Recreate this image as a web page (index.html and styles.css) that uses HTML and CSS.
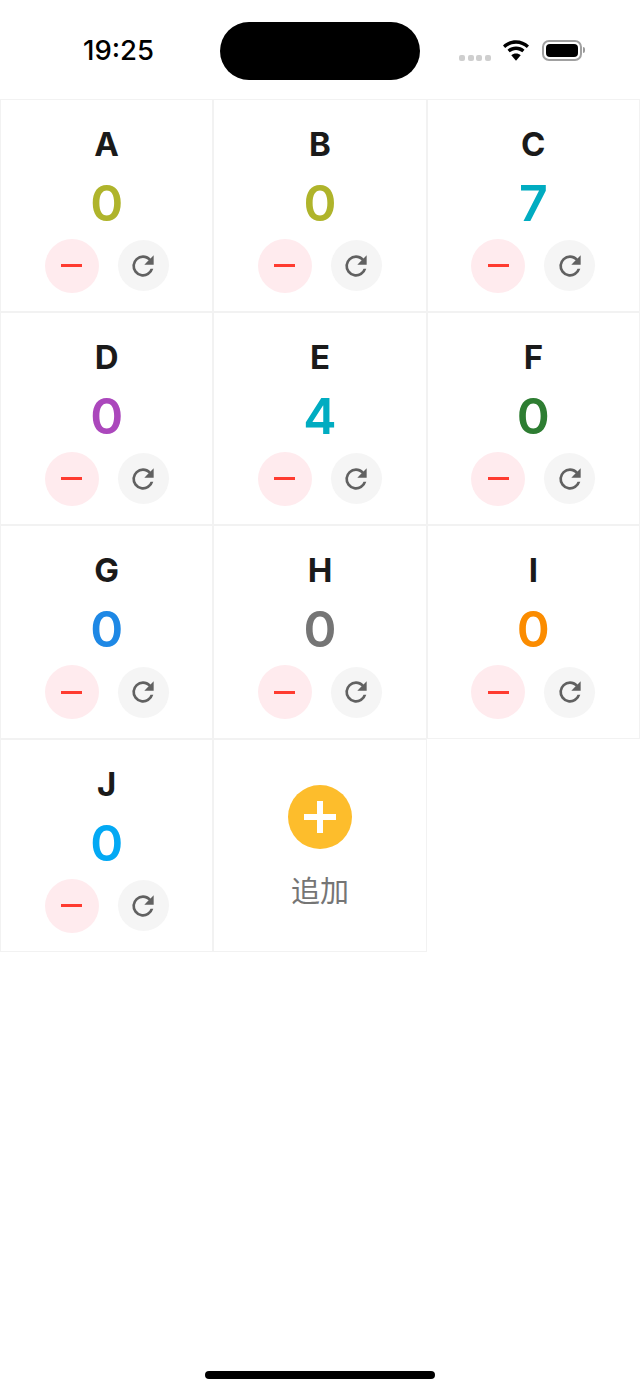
FILE: index.html
```html
<!DOCTYPE html>
<html lang="zh">
<head>
    <meta charset="UTF-8">
    <meta name="viewport" content="width=device-width, initial-scale=1.0">
    <title>计数器</title>
    <link rel="stylesheet" href="styles.css">
</head>
<body>
    <div class="status-bar">
        <div class="time">19:25</div>
        <div class="island"></div>
        <div class="signal"><i></i><i></i><i></i><i></i></div>
        <svg class="wifi" viewBox="1.7 1.2 22.6 17.8">
            <path d="M13 4.200c3.600 0 6.900 1.400 9.400 3.700l1.900-2.200C21.300 2.900 17.300 1.200 13 1.200S4.700 2.900 1.700 5.700l1.900 2.200C6.100 5.600 9.400 4.200 13 4.200z"/>
            <path d="M13 9.600c2.100 0 4 .8 5.500 2.100l1.900-2.200c-2-1.800-4.600-2.800-7.400-2.800s-5.400 1-7.400 2.800l1.900 2.200c1.500-1.300 3.400-2.100 5.500-2.100z"/>
            <path d="M13 19l4.100-4.700c-1.100-.9-2.500-1.500-4.100-1.500s-3 .6-4.100 1.500z"/>
        </svg>
        <div class="battery"><div class="battery-fill"></div></div>
        <div class="battery-cap"></div>
    </div>

    <div class="grid">
        <div class="cell">
            <div class="name">A</div>
            <div class="count olive">0</div>
            <div class="actions">
                <button class="minus"><span></span></button>
                <button class="reset"><svg viewBox="0 0 24 24"><path d="M17.650 6.350A7.950 7.950 0 0 0 12 4a8 8 0 1 0 7.730 10h-2.080A6 6 0 1 1 12 6c1.660 0 3.140.69 4.220 1.780L13 11h7V4z"/></svg></button>
            </div>
        </div>
        <div class="cell">
            <div class="name">B</div>
            <div class="count olive">0</div>
            <div class="actions">
                <button class="minus"><span></span></button>
                <button class="reset"><svg viewBox="0 0 24 24"><path d="M17.650 6.350A7.950 7.950 0 0 0 12 4a8 8 0 1 0 7.730 10h-2.080A6 6 0 1 1 12 6c1.660 0 3.140.69 4.220 1.780L13 11h7V4z"/></svg></button>
            </div>
        </div>
        <div class="cell">
            <div class="name">C</div>
            <div class="count teal">7</div>
            <div class="actions">
                <button class="minus"><span></span></button>
                <button class="reset"><svg viewBox="0 0 24 24"><path d="M17.650 6.350A7.950 7.950 0 0 0 12 4a8 8 0 1 0 7.730 10h-2.080A6 6 0 1 1 12 6c1.660 0 3.140.69 4.220 1.780L13 11h7V4z"/></svg></button>
            </div>
        </div>
        <div class="cell">
            <div class="name">D</div>
            <div class="count purple">0</div>
            <div class="actions">
                <button class="minus"><span></span></button>
                <button class="reset"><svg viewBox="0 0 24 24"><path d="M17.650 6.350A7.950 7.950 0 0 0 12 4a8 8 0 1 0 7.730 10h-2.080A6 6 0 1 1 12 6c1.660 0 3.140.69 4.220 1.780L13 11h7V4z"/></svg></button>
            </div>
        </div>
        <div class="cell">
            <div class="name">E</div>
            <div class="count teal">4</div>
            <div class="actions">
                <button class="minus"><span></span></button>
                <button class="reset"><svg viewBox="0 0 24 24"><path d="M17.650 6.350A7.950 7.950 0 0 0 12 4a8 8 0 1 0 7.730 10h-2.080A6 6 0 1 1 12 6c1.660 0 3.140.69 4.220 1.780L13 11h7V4z"/></svg></button>
            </div>
        </div>
        <div class="cell">
            <div class="name">F</div>
            <div class="count green">0</div>
            <div class="actions">
                <button class="minus"><span></span></button>
                <button class="reset"><svg viewBox="0 0 24 24"><path d="M17.650 6.350A7.950 7.950 0 0 0 12 4a8 8 0 1 0 7.730 10h-2.080A6 6 0 1 1 12 6c1.660 0 3.140.69 4.220 1.780L13 11h7V4z"/></svg></button>
            </div>
        </div>
        <div class="cell">
            <div class="name">G</div>
            <div class="count blue">0</div>
            <div class="actions">
                <button class="minus"><span></span></button>
                <button class="reset"><svg viewBox="0 0 24 24"><path d="M17.650 6.350A7.950 7.950 0 0 0 12 4a8 8 0 1 0 7.730 10h-2.080A6 6 0 1 1 12 6c1.660 0 3.140.69 4.220 1.780L13 11h7V4z"/></svg></button>
            </div>
        </div>
        <div class="cell">
            <div class="name">H</div>
            <div class="count grey">0</div>
            <div class="actions">
                <button class="minus"><span></span></button>
                <button class="reset"><svg viewBox="0 0 24 24"><path d="M17.650 6.350A7.950 7.950 0 0 0 12 4a8 8 0 1 0 7.730 10h-2.080A6 6 0 1 1 12 6c1.660 0 3.140.69 4.220 1.780L13 11h7V4z"/></svg></button>
            </div>
        </div>
        <div class="cell">
            <div class="name">I</div>
            <div class="count orange">0</div>
            <div class="actions">
                <button class="minus"><span></span></button>
                <button class="reset"><svg viewBox="0 0 24 24"><path d="M17.650 6.350A7.950 7.950 0 0 0 12 4a8 8 0 1 0 7.730 10h-2.080A6 6 0 1 1 12 6c1.660 0 3.140.69 4.220 1.780L13 11h7V4z"/></svg></button>
            </div>
        </div>
        <div class="cell">
            <div class="name">J</div>
            <div class="count sky">0</div>
            <div class="actions">
                <button class="minus"><span></span></button>
                <button class="reset"><svg viewBox="0 0 24 24"><path d="M17.650 6.350A7.950 7.950 0 0 0 12 4a8 8 0 1 0 7.730 10h-2.080A6 6 0 1 1 12 6c1.660 0 3.140.69 4.220 1.780L13 11h7V4z"/></svg></button>
            </div>
        </div>
        <div class="cell add-cell">
            <div class="add-button"><span class="plus-h"></span><span class="plus-v"></span></div>
            <div class="add-label">追加</div>
        </div>
    </div>

    <div class="home-bar"></div>
</body>
</html>
```

FILE: styles.css
```css
* {
    margin: 0;
    padding: 0;
    box-sizing: border-box;
}
html, body {
    width: 100%;
    height: 100%;
    background: white;
    font-family: 'Inter', 'Noto Sans CJK SC', sans-serif;
    color: #1a1a1a;
}
body {
    display: flex;
    flex-direction: column;
}
.status-bar {
    height: 98.5px;
    flex-shrink: 0;
    display: flex;
    align-items: flex-start;
    padding-left: 83px;
    color: black;
}
.time {
    width: 137px;
    margin-top: 34px;
    font-size: 27.500px;
    line-height: 33px;
    font-weight: 500;
}
.island {
    width: 200px;
    height: 58px;
    margin-top: 22px;
    background: black;
    border-radius: 29px;
}
.signal {
    display: flex;
    gap: 2.5px;
    margin: 54.5px 0 0 39px;
}
.signal i {
    width: 6px;
    height: 6px;
    border-radius: 2px;
    background: #cfcfcf;
}
.wifi {
    width: 26px;
    height: 21px;
    margin: 40px 0 0 12.5px;
    display: block;
}
.battery {
    width: 40px;
    height: 21px;
    margin: 40px 0 0 12.5px;
    padding: 2px;
    border: 2px solid #a0a0a0;
    border-radius: 7px;
}
.battery-fill {
    width: 100%;
    height: 100%;
    background: black;
    border-radius: 4px;
}
.battery-cap {
    width: 2px;
    height: 6px;
    margin: 47px 0 0 1px;
    background: #9a9a9a;
    border-radius: 0 2px 2px 0;
}
.grid {
    display: grid;
    grid-template-columns: repeat(3, 1fr);
    grid-auto-rows: 213.4px;
}
.cell {
    border: 1px solid #f2f2f2;
    display: flex;
    flex-direction: column;
    align-items: center;
}
.name {
    margin-top: 23px;
    height: 42px;
    font-size: 33px;
    line-height: 42px;
    font-weight: 700;
}
.count {
    height: 60px;
    margin-top: 8px;
    font-size: 50px;
    line-height: 60px;
    font-weight: 600;
}
.olive { color: #afb42b; }
.teal { color: #00acc1; }
.purple { color: #ab47bc; }
.green { color: #2e7d32; }
.blue { color: #1e88e5; }
.grey { color: #757575; }
.orange { color: #fb8c00; }
.sky { color: #03a9f4; }
.actions {
    display: flex;
    align-items: center;
    gap: 19px;
    margin-top: 6px;
}
button {
    border: none;
    border-radius: 50%;
    display: flex;
    justify-content: center;
    align-items: center;
}
.minus {
    width: 54px;
    height: 54px;
    background: #ffebee;
}
.minus span {
    width: 21px;
    height: 3px;
    background: #ff3b30;
}
.reset {
    width: 51px;
    height: 51px;
    background: #f5f5f5;
}
.reset svg {
    width: 32px;
    height: 32px;
    fill: #616161;
}
.add-cell {
    justify-content: flex-start;
}
.add-button {
    position: relative;
    width: 64px;
    height: 64px;
    margin-top: 45px;
    border-radius: 50%;
    background: #fdbd2c;
}
.plus-h, .plus-v {
    position: absolute;
    background: white;
}
.plus-h {
    left: 16px;
    top: 29px;
    width: 32px;
    height: 6px;
}
.plus-v {
    left: 29px;
    top: 16px;
    width: 6px;
    height: 32px;
}
.add-label {
    margin-top: 22px;
    font-size: 29px;
    line-height: 42px;
    color: #757575;
}
.home-bar {
    width: 230px;
    height: 8px;
    margin: auto auto 12px;
    border-radius: 4px;
    background: black;
}
```
